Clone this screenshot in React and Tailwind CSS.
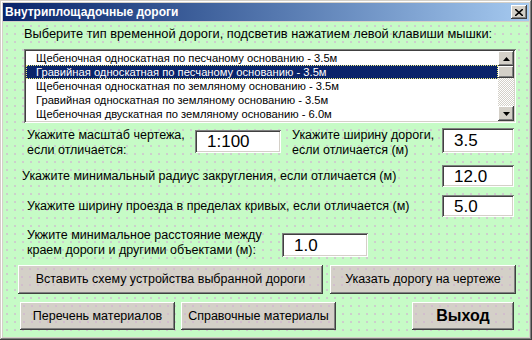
const dots = 'bg-[radial-gradient(circle,#d0b4d0_0.6px,transparent_0.9px)] bg-[length:8px_8px]'
const raised = 'shadow-[inset_-1px_-1px_#404040,inset_1px_1px_#ffffff,inset_-2px_-2px_#808080,inset_2px_2px_#d4d0c8]'
const sunken = 'shadow-[inset_1px_1px_#808080,inset_-1px_-1px_#ffffff,inset_2px_2px_#404040,inset_-2px_-2px_#d4d0c8]'

const roads = [
  'Щебеночная односкатная по песчаному основанию - 3.5м',
  'Гравийная односкатная по песчаному основанию - 3.5м',
  'Щебеночная односкатная по земляному основанию - 3.5м',
  'Гравийная односкатная по земляному основанию - 3.5м',
  'Щебеночная двускатная по земляному основанию - 6.0м',
]

function Field({ value, className }) {
  return (
    <div className={`bg-white ${sunken} flex items-center pl-[12px] text-[17px] leading-none ${className}`}>
      {value}
    </div>
  )
}

function Button({ children, className }) {
  return (
    <button className={`bg-[#d4d0c8] ${dots} ${raised} flex items-center justify-center text-[12.5px] ${className}`}>
      {children}
    </button>
  )
}

function Arrow({ up }) {
  return (
    <div className={`w-[16px] h-[15px] bg-[#d4d0c8] ${raised} flex items-center justify-center`}>
      <svg width="7" height="4" viewBox="0 0 7 4">
        <polygon points={up ? '3.5,0 7,4 0,4' : '0,0 7,0 3.5,4'} fill="#000" />
      </svg>
    </div>
  )
}

export default function App() {
  return (
    <div className="w-[532px] h-[340px] bg-[#d4d0c8] p-[3px] flex flex-col shadow-[inset_-1px_-1px_#404040,inset_1px_1px_#d4d0c8,inset_-2px_-2px_#808080,inset_2px_2px_#ffffff] text-black" style={{ fontFamily: '"Liberation Sans", Arial, sans-serif' }}>
      <div className="h-[18px] bg-linear-to-r from-[#0a246a] to-[#a6caf0] flex items-center justify-between pl-[2px] pr-[2px]">
        <span className="text-white font-bold text-[12px]">Внутриплощадочные дороги</span>
        <div className={`w-[16px] h-[14px] bg-[#d4d0c8] ${raised} flex items-center justify-center`}>
          <svg width="8" height="7" viewBox="0 0 8 7">
            <path d="M0 0 L8 7 M8 0 L0 7" stroke="#000" strokeWidth="1.6" />
          </svg>
        </div>
      </div>

      <div className={`mt-[1px] flex-1 bg-[#c6fbc6] ${dots} flex flex-col`}>
        <div className="ml-[21px] mt-[4px] h-[16px] leading-[16px] text-[12.8px]">
          Выберите тип временной дороги, подсветив нажатием левой клавиши мышки:
        </div>

        <div className={`ml-[21px] mt-[7px] w-[492px] h-[74px] bg-white ${sunken} p-[2px] flex`}>
          <div className="flex-1 flex flex-col text-[11.2px]">
            {roads.map((r, i) => (
              <div
                key={r}
                className={`h-[14px] leading-[12px] pl-[9px] ${i === 1 ? 'bg-[#0a246a] text-white border border-dotted border-[#f0f080]' : 'border border-transparent'}`}
              >
                {r}
              </div>
            ))}
          </div>
          <div className="w-[16px] flex flex-col bg-[repeating-conic-gradient(#ffffff_0_25%,#d4d0c8_0_50%)] bg-[length:2px_2px]">
            <Arrow up />
            <div className={`w-[16px] h-[12px] bg-[#d4d0c8] ${raised}`} />
            <div className="flex-1" />
            <Arrow />
          </div>
        </div>

        <div className="mt-[5px] h-[30px] flex text-[12.5px]">
          <div className="ml-[24px] w-[168px] leading-[15px]">
            Укажите масштаб чертежа,<br />если отличается:
          </div>
          <Field value="1:100" className="mt-[2px] w-[86px] h-[23px]" />
          <div className="ml-[11px] w-[150px] leading-[15px]">
            Укажите ширину дороги,<br />если отличается (м)
          </div>
          <Field value="3.5" className="w-[72px] h-[25px]" />
        </div>

        <div className="mt-[7px] h-[22px] flex items-center text-[12.5px]">
          <div className="ml-[19px] flex-1">Укажите минимальный радиус закругления, если отличается (м)</div>
          <Field value="12.0" className="mr-[15px] w-[72px] h-[22px]" />
        </div>

        <div className="mt-[8px] h-[22px] flex items-center text-[12.5px]">
          <div className="ml-[24px] flex-1">Укажите ширину проезда в пределах кривых, если отличается (м)</div>
          <Field value="5.0" className="mr-[15px] w-[72px] h-[22px]" />
        </div>

        <div className="mt-[11px] h-[30px] flex text-[12.5px]">
          <div className="ml-[24px] w-[255px] leading-[15px]">
            Укжите минимальное расстояние между<br />краем дороги и другими объектами (м):
          </div>
          <Field value="1.0" className="mt-[5px] w-[86px] h-[24px]" />
        </div>

        <div className="mt-[7px] flex gap-[7px] pl-[15px]">
          <Button className="w-[305px] h-[29px]">Вставить схему устройства выбранной дороги</Button>
          <Button className="w-[186px] h-[29px]">Указать дорогу на чертеже</Button>
        </div>

        <div className="mt-[8px] flex pl-[17px]">
          <Button className="w-[155px] h-[28px]">Перечень материалов</Button>
          <Button className="ml-[6px] w-[155px] h-[28px]">Справочные материалы</Button>
          <Button className="ml-[76px] w-[102px] h-[28px] !text-[16px] font-bold">Выход</Button>
        </div>
      </div>
    </div>
  )
}
